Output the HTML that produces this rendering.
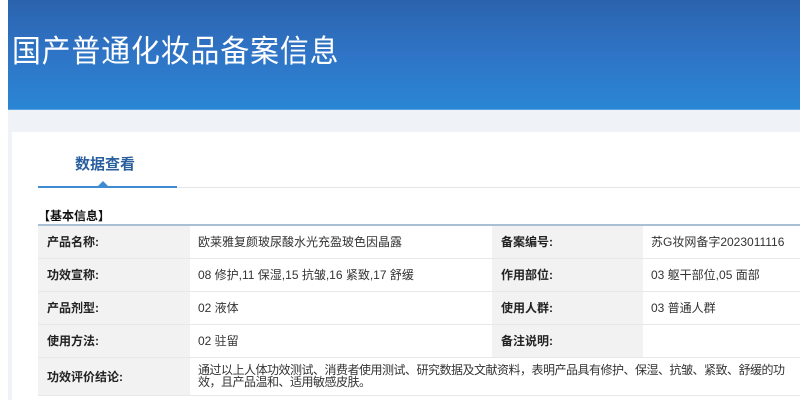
<!DOCTYPE html>
<html><head><meta charset="utf-8"><style>
*{margin:0;padding:0;box-sizing:border-box}
body{width:800px;height:400px;overflow:hidden;background:#fff;font-family:"Liberation Sans","Noto Sans CJK SC",sans-serif;position:relative}
.hdr{position:absolute;left:8px;top:0;width:792px;height:110px;background:linear-gradient(180deg,#2b63ad 0%,#2f74c6 50%,#2a86d4 100%);border-bottom:1px solid #5aa0e0}
.hdr h1{position:absolute;left:4px;top:32px;color:#fff;font-weight:normal;font-size:31px;letter-spacing:1px;line-height:40px;transform:scaleX(0.93);transform-origin:0 0;white-space:nowrap}
.gray{position:absolute;left:8px;top:110px;width:792px;height:290px;background:#eff2f6}
.panel{position:absolute;left:12px;top:132px;width:788px;height:268px;background:#fff}
.tab{position:absolute;left:75px;top:153px;font-size:15px;font-weight:bold;color:#2a5f9e}
.line1{position:absolute;left:38px;top:186px;width:139px;height:2px;background:#3f8ad0}
.line2{position:absolute;left:177px;top:187px;width:623px;height:1px;background:#e6e6e6}
.tri{position:absolute;left:98px;top:181px;width:0;height:0;border-left:5px solid transparent;border-right:5px solid transparent;border-bottom:5px solid #3f8ad0}
.sec{position:absolute;left:38px;top:207px;font-size:12px;font-weight:bold;color:#111}
table{position:absolute;left:38px;top:224px;width:762px;border-collapse:collapse;border-top:2px solid #a9bfd6;font-size:12px;color:#333;table-layout:fixed}
td{border-bottom:1px solid #e8e8e8;height:33px;padding-left:9px;vertical-align:middle}
td.l{background:#f2f2f2;font-weight:bold;color:#222}
td.v{background:#fff;padding-left:8px}
</style></head><body>
<div class="hdr"><h1>国产普通化妆品备案信息</h1></div>
<div class="gray"></div>
<div class="panel"></div>
<div class="tab">数据查看</div>
<div class="line2"></div><div class="line1"></div><div class="tri"></div>
<div class="sec">【基本信息】</div>
<table>
<colgroup><col style="width:152px"><col style="width:302px"><col style="width:151px"><col></colgroup>
<tr><td class="l">产品名称:</td><td class="v">欧莱雅复颜玻尿酸水光充盈玻色因晶露</td><td class="l">备案编号:</td><td class="v">苏G妆网备字2023011116</td></tr>
<tr><td class="l">功效宣称:</td><td class="v">08 修护,11 保湿,15 抗皱,16 紧致,17 舒缓</td><td class="l">作用部位:</td><td class="v">03 躯干部位,05 面部</td></tr>
<tr><td class="l">产品剂型:</td><td class="v">02 液体</td><td class="l">使用人群:</td><td class="v">03 普通人群</td></tr>
<tr><td class="l">使用方法:</td><td class="v">02 驻留</td><td class="l">备注说明:</td><td class="v"></td></tr>
<tr><td class="l" style="height:38px">功效评价结论:</td><td class="v" colspan="3" style="line-height:12px;padding-right:10px;letter-spacing:-0.5px">通过以上人体功效测试、消费者使用测试、研究数据及文献资料，表明产品具有修护、保湿、抗皱、紧致、舒缓的功效，且产品温和、适用敏感皮肤。</td></tr>
</table>
</body></html>
